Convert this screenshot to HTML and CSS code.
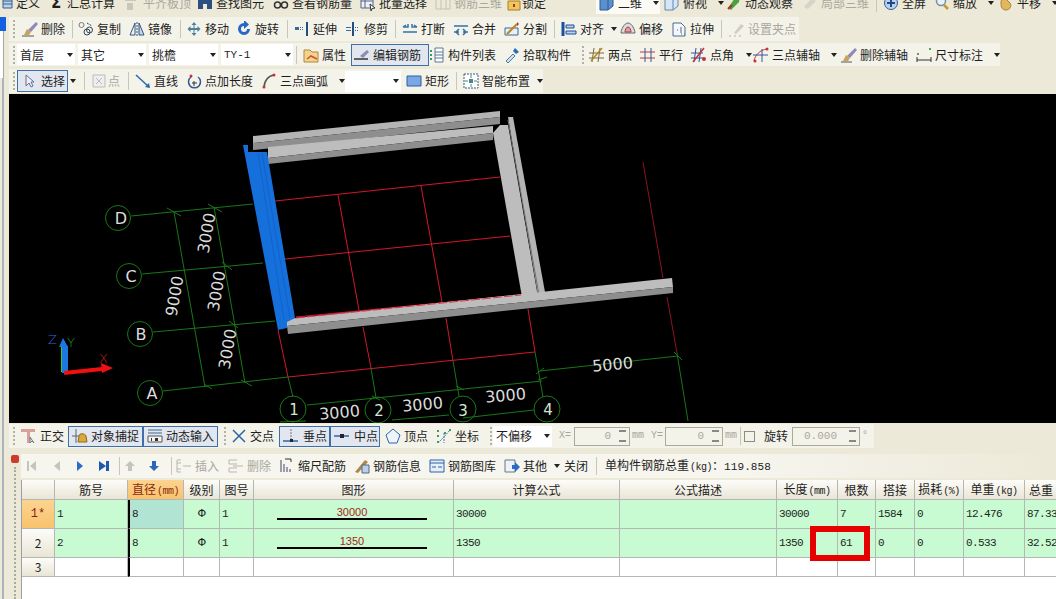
FILE: index.html
```html
<!DOCTYPE html>
<html lang="zh-CN">
<head>
<meta charset="utf-8">
<title>钢筋编辑</title>
<link rel="stylesheet" href="styles.css">
</head>
<body>
<div class="tb top">
  <div class="it"><svg class="ic" viewBox="0 0 16 16"><path d="M6 2h9v11H6z" fill="#bcd0ea" stroke="#36618f"/><path d="M6 6h9M6 9h9" stroke="#36618f"/></svg><span>定义</span></div>
  <div class="it"><b class="ic sigma">Σ</b><span>汇总计算</span></div>
  <div class="it off"><svg class="ic" viewBox="0 0 16 16"><path d="M1 2h11v4H1zM3 8h6v7H3z" fill="#c9c7ba"/></svg><span>平齐板顶</span></div>
  <div class="it"><svg class="ic" viewBox="0 0 16 16"><path d="M1 3h5v11H1zM10 3h5v11h-5zM6 5h4v4H6z" fill="#2d4f80"/></svg><span>查找图元</span></div>
  <div class="it"><svg class="ic" viewBox="0 0 16 16"><circle cx="4.500" cy="10" r="3" fill="none" stroke="#333" stroke-width="1.500"/><circle cx="11.500" cy="10" r="3" fill="none" stroke="#333" stroke-width="1.500"/></svg><span>查看钢筋量</span></div>
  <div class="it"><svg class="ic" viewBox="0 0 16 16"><path d="M1 2h12v11H1zM1 6h12M5 2v11" fill="#eef" stroke="#567"/><path d="M10 9l5 4-3 .5-1 2.500z" fill="#fff" stroke="#333"/></svg><span>批量选择</span></div>
  <div class="it off"><svg class="ic" viewBox="0 0 16 16"><path d="M1 2h14v12H1zM6 2v12M11 2v12" fill="none" stroke="#c4c2b6"/></svg><span>钢筋三维</span></div>
  <div class="it lock"><svg class="ic" viewBox="0 0 16 16"><path d="M2 6h12v9H2z" fill="#f1c65c" stroke="#a87f2a"/><path d="M7 9h2v3H7z" fill="#a33"/></svg><span>锁定</span></div>
  <div class="it white"><svg class="ic" viewBox="0 0 16 16"><path d="M1 4l5-3h8v10l-5 4H1z" fill="#5c8fd0" stroke="#2b5a96"/><path d="M1 4h8v11M9 4l5-3" fill="none" stroke="#2b5a96"/></svg><span>二维</span><i class="caret"></i></div>
  <div class="it"><svg class="ic" viewBox="0 0 16 16"><path d="M1 4l5-3h8v10l-5 4H1z" fill="#d7e5f5" stroke="#6287b3"/><path d="M1 4h8v11M9 4l5-3" fill="none" stroke="#6287b3"/></svg><span>俯视</span><i class="caret"></i></div>
  <div class="it"><svg class="ic" viewBox="0 0 16 16"><path d="M2 13L9 3l5-1-1 5-8 8z" fill="#4aa23c"/><path d="M2 14l4-4" stroke="#b2342c" stroke-width="2"/></svg><span>动态观察</span></div>
  <div class="it off"><svg class="ic" viewBox="0 0 16 16"><path d="M2 12L10 3l4 3-8 8z" fill="#d6d4c8"/></svg><span>局部三维</span></div>
  <i class="sep"></i>
  <div class="it"><svg class="ic" viewBox="0 0 16 16"><circle cx="8" cy="8" r="6.500" fill="#b9d2ee" stroke="#2c5d9a"/><path d="M8 4v8M4 8h8" stroke="#1e4a86" stroke-width="2"/></svg><span>全屏</span></div>
  <div class="it"><svg class="ic" viewBox="0 0 16 16"><circle cx="7" cy="6" r="4.500" fill="#e8f0f8" stroke="#7a8ea4" stroke-width="1.500"/><path d="M10 10l4 4" stroke="#c69a2c" stroke-width="2.500"/></svg><span>缩放</span><i class="caret"></i></div>
  <div class="it"><svg class="ic" viewBox="0 0 16 16"><path d="M3 8c0-4 2-6 4-5l5 5c2 3 0 7-4 7s-5-3-5-7z" fill="#e2b75e" stroke="#a57f31"/></svg><span>平移</span><i class="caret"></i></div>
</div>

<div class="shell">
  <div class="gutter">
    <div class="g-blue"></div>
    <div class="g-panel"></div>
    <div class="g-line"></div>
  </div>
  <main class="main">
    <div class="tb strip r2">
      <i class="grip"></i>
      <div class="it"><svg class="ic" viewBox="0 0 16 16"><path d="M0 15h12" stroke="#555"/><path d="M6 9l8-8 2 2-7 8z" fill="#8f8ab8"/><path d="M2 14l3-6 4 3-2 3z" fill="#c9a35a"/></svg><span>删除</span></div>
      <i class="sep"></i>
      <div class="it"><svg class="ic" viewBox="0 0 16 16"><circle cx="3.500" cy="4" r="2.500" fill="none" stroke="#778"/><circle cx="9" cy="11" r="3" fill="none" stroke="#345"/><circle cx="11.500" cy="9" r="3" fill="none" stroke="#345"/><path d="M9 2l5 3" stroke="#345" stroke-dasharray="2 1"/></svg><span>复制</span></div>
      <div class="it"><svg class="ic" viewBox="0 0 16 16"><path d="M6 2L1 14h5z" fill="none" stroke="#2f557f"/><path d="M8 1v14" stroke="#2f557f" stroke-dasharray="2 1"/><path d="M10 2l5 12h-5z" fill="#c7d6e6" stroke="#2f557f"/></svg><span>镜像</span></div>
      <i class="sep"></i>
      <div class="it"><svg class="ic" viewBox="0 0 16 16"><path d="M8 1l2.500 3h-2v3h3V5l3 3-3 3V9h-3v3h2L8 15l-2.500-3h2V9h-3v2l-3-3 3-3v2h3V4h-2z" fill="#4d7f9e"/></svg><span>移动</span></div>
      <div class="it"><svg class="ic" viewBox="0 0 16 16"><path d="M8 2a6 6 0 1 0 6 6h-3a3 3 0 1 1-3-3v3l5-4.500L8-1z" fill="#2868c4"/></svg><span>旋转</span></div>
      <i class="sep"></i>
      <div class="it"><svg class="ic" viewBox="0 0 16 16"><path d="M1 6h4v3H1zM6 6h1v1H6zM8 6h1v1H8zM6 8h1v1H6zM8 8h1v1H8z" fill="#3a6a9a"/><path d="M13 1v14" stroke="#234f80" stroke-width="2"/></svg><span>延伸</span></div>
      <div class="it"><svg class="ic" viewBox="0 0 16 16"><path d="M1 6h5v1H1zM1 9h5v1H1zM10 6h1v1h-1zM12 6h1v1h-1zM10 9h1v1h-1zM12 9h1v1h-1z" fill="#3a6a9a"/><path d="M8 1v14" stroke="#234f80" stroke-width="2"/></svg><span>修剪</span></div>
      <i class="sep"></i>
      <div class="it"><svg class="ic" viewBox="0 0 16 16"><path d="M1 6h5v-3M10 3v3h5M1 11h14M1 6l3-2M15 6l-3-2" fill="none" stroke="#3672a8" stroke-width="1.500"/></svg><span>打断</span></div>
      <div class="it"><svg class="ic" viewBox="0 0 16 16"><path d="M1 5h14M1 11h5M10 11h5M6 8l-3 3 3 3M10 8l3 3-3 3" fill="none" stroke="#3672a8" stroke-width="1.500"/></svg><span>合并</span></div>
      <div class="it"><svg class="ic" viewBox="0 0 16 16"><path d="M1 7h13v7H1z" fill="#eee" stroke="#2f6a9a"/><path d="M3 13L13 3" stroke="#b8862a" stroke-width="2"/><path d="M13 1l2 2-2 2z" fill="#b22"/></svg><span>分割</span></div>
      <i class="sep"></i>
      <div class="it"><svg class="ic" viewBox="0 0 16 16"><path d="M2 1v14" stroke="#1c4f9c" stroke-width="3"/><path d="M5 4h8v3H5zM5 10h10v3H5z" fill="#bcd0ea" stroke="#1c4f9c"/></svg><span>对齐</span><i class="caret near"></i></div>
      <div class="it"><svg class="ic" viewBox="0 0 16 16"><path d="M1 12c0-3 3-10 7-10s7 7 7 10z" fill="#ddd" stroke="#666"/><path d="M5 11c0-2 1-5 3-5s3 3 3 5z" fill="#e79a9a" stroke="#945"/></svg><span>偏移</span></div>
      <div class="it"><svg class="ic" viewBox="0 0 16 16"><path d="M2 2h8l4 4v9H2z" fill="#f4f6fa" stroke="#4d6b8d"/><path d="M10 6v6M6 9h1M10 13h1M13 13h1" stroke="#4d6b8d"/></svg><span>拉伸</span></div>
      <i class="sep"></i>
      <div class="it off"><svg class="ic" viewBox="0 0 16 16"><path d="M5 12L12 3l3 2-8 8z" fill="#d0cec2"/><path d="M0 15h2M5 15h2M10 15h2" stroke="#b3b1a5"/></svg><span>设置夹点</span></div>
    </div>

    <div class="tb strip r3">
      <i class="grip"></i>
      <div class="combo"><span>首层</span><i class="caret"></i></div>
      <div class="combo"><span>其它</span><i class="caret"></i></div>
      <div class="combo"><span>挑檐</span><i class="caret"></i></div>
      <div class="combo"><span class="mono">TY-1</span><i class="caret"></i></div>
      <i class="sep"></i>
      <div class="it"><svg class="ic" viewBox="0 0 16 16"><path d="M1 3h6l2 2h6v10H1z" fill="#f3d48a" stroke="#b0873a"/><path d="M4 12l4-3 6 3" fill="none" stroke="#c9513a" stroke-width="1.500"/></svg><span>属性</span></div>
      <div class="it btn"><svg class="ic" viewBox="0 0 16 16"><path d="M0 12h14" stroke="#333" stroke-width="1.500"/><path d="M6 9l7-6 2 2-6 6z" fill="#8f8ab8"/></svg><span>编辑钢筋</span></div>
      <div class="it"><svg class="ic" viewBox="0 0 16 16"><path d="M1 3h2v2H1zM1 7h2v2H1zM1 11h2v2H1z" fill="#3c9a5c"/><path d="M6 1h8v14H6zM6 5h8M6 8h8M6 11h8" fill="#fff" stroke="#5a7896"/></svg><span>构件列表</span></div>
      <div class="it"><svg class="ic" viewBox="0 0 16 16"><path d="M2 14l7-7 2 2-7 7z" fill="#cfe0f0" stroke="#4a78a8"/><path d="M9 4l2-3 4 4-3 2z" fill="#2b6cb8"/></svg><span>拾取构件</span></div>
      <i class="grip"></i>
      <div class="it"><svg class="ic" viewBox="0 0 16 16"><path d="M0 6h15M0 11h15M5 1L3 15M11 1L9 15" stroke="#786a3a"/><path d="M13 1L2 14" stroke="#b4862a" stroke-width="1.500"/></svg><span>两点</span></div>
      <div class="it"><svg class="ic" viewBox="0 0 16 16"><path d="M0 5h15M0 11h15" stroke="#c2353a"/><path d="M5 1v14M11 1v14" stroke="#33569a"/></svg><span>平行</span></div>
      <div class="it"><svg class="ic" viewBox="0 0 16 16"><path d="M0 6h12M0 11h12M5 1L3 15M10 1L8 15" stroke="#33569a"/><path d="M13 1L2 15" stroke="#c2353a" stroke-width="1.500"/><circle cx="13" cy="12" r="2" fill="#c2353a"/></svg><span>点角</span><i class="caret wide"></i></div>
      <div class="it"><svg class="ic" viewBox="0 0 16 16"><path d="M1 14C2 8 7 3 14 2" fill="none" stroke="#c2353a"/><path d="M0 8h15M9 2v13" stroke="#33569a"/><circle cx="2" cy="14" r="1.500" fill="#c2353a"/><circle cx="14" cy="2" r="1.500" fill="#c2353a"/></svg><span>三点辅轴</span><i class="caret"></i></div>
      <div class="it"><svg class="ic" viewBox="0 0 16 16"><path d="M0 15h11" stroke="#555"/><path d="M6 9l8-8 2 2-7 8z" fill="#8f8ab8"/><path d="M2 14l3-6 4 3-2 3z" fill="#c9a35a"/></svg><span>删除辅轴</span></div>
      <div class="it"><svg class="ic" viewBox="0 0 16 16"><path d="M1 10v5M15 10v5M1 13h14" stroke="#333"/><path d="M1 6h2v2H1zM13 1h2v2h-2z" fill="#5aa05a"/></svg><span>尺寸标注</span><i class="caret"></i></div>
    </div>

    <div class="tb strip r4">
      <i class="grip"></i>
      <div class="it btn wide-pad"><svg class="ic" viewBox="0 0 16 16"><path d="M5 2v11l3-3 2 4 2-1-2-4h3z" fill="#eef" stroke="#66738a"/></svg><span>选择</span></div>
      <i class="caret dark"></i>
      <i class="sep"></i>
      <div class="it off"><svg class="ic" viewBox="0 0 16 16"><path d="M2 2h12v12H2zM5 5l6 6M11 5l-6 6" fill="#eee" stroke="#bbb"/></svg><span>点</span></div>
      <i class="sep"></i>
      <div class="it"><svg class="ic" viewBox="0 0 16 16"><path d="M1 2l13 12" stroke="#2c6aa8" stroke-width="1.500"/><path d="M15 15l-1-5-4 4z" fill="#2c6aa8"/></svg><span>直线</span></div>
      <div class="it"><svg class="ic" viewBox="0 0 16 16"><path d="M5 4a6 6 0 1 0 7 0" fill="none" stroke="#33569a" stroke-width="1.500"/><path d="M8 8v5M6 10h5" stroke="#333"/><circle cx="5" cy="3" r="1.500" fill="#c2353a"/></svg><span>点加长度</span></div>
      <div class="it"><svg class="ic" viewBox="0 0 16 16"><path d="M3 15C3 8 7 3 13 2" fill="none" stroke="#555" stroke-width="1.500"/><circle cx="3" cy="14" r="1.500" fill="#c2353a"/><circle cx="13" cy="2" r="1.500" fill="#c2353a"/></svg><span>三点画弧</span><i class="caret"></i></div>
      <div class="combo blank"><i class="caret"></i></div>
      <div class="it"><svg class="ic" viewBox="0 0 16 16"><path d="M1 3h14v10H1z" fill="#7aa8e4" stroke="#2f5f9e"/></svg><span>矩形</span></div>
      <i class="sep"></i>
      <div class="it"><svg class="ic" viewBox="0 0 16 16"><path d="M1 1h14v14H1z" fill="#fff" stroke="#3b5b7c" stroke-dasharray="2 1"/><path d="M6 6h4v4H6z" fill="#4d7f9e"/><path d="M2 8h3M11 8h3M8 2v3M8 11v3" stroke="#3c9a5c"/></svg><span>智能布置</span><i class="caret near"></i></div>
    </div>

    <svg class="canvas" viewBox="9 94 1047 329" font-family="'DejaVu Sans',sans-serif">
      <rect x="9" y="94" width="1047" height="329" fill="#000"/>
      <g fill="none" stroke="#d3182a" stroke-width="1">
        <path d="M275 201L500 177M285 259L510 236M296 317L521 295M288 377L535 352"/>
        <path d="M278 330L288 377M338 195L359 310M363 327L371 368M421 186L442 302M446 318L453 361M528 309L535 352"/>
        <path d="M643 162L663 278" stroke="#8c1420"/><path d="M667 297L677 353" stroke="#8c1420"/>
      </g>
      <g fill="none" stroke="#187818" stroke-width="1">
        <path d="M131 216L253 204M142 274L263 263M153 332L275 321M163 391L288 377"/>
        <path d="M174 212L205 387M214 207L245 383"/>
        <path d="M288 377L293 397M371 368L376 398M453 361L459 396M535 352L543 397M677 353L688 421"/>
        <path d="M307 405L542 381M306 421L280 422M463 418L534 410M392 420L449 415M540 371L678 356"/>
        <path d="M167 208L181 216M208 204L222 212M222 262L232 270M229 321L238 328M204 384L212 389M241 380L252 386M372 396L380 400M456 386L464 390M538 380L547 377M536 374L544 368M674 352L682 360"/>
        <circle cx="118" cy="218" r="12.500"/><circle cx="129" cy="276" r="12.500"/><circle cx="140" cy="334" r="12.500"/><circle cx="150" cy="393" r="12.500"/>
        <circle cx="293" cy="409" r="13"/><circle cx="378" cy="410" r="13"/><circle cx="463" cy="409" r="13"/><circle cx="547" cy="409" r="13"/>
      </g>
      <g fill="#dcdcdc" font-size="16" text-anchor="middle">
        <text x="121" y="224">D</text><text x="131" y="282">C</text><text x="141" y="340">B</text><text x="152" y="399">A</text>
      </g>
      <g fill="#cfe8cf" font-size="15" text-anchor="middle">
        <text x="294" y="415">1</text><text x="379" y="416">2</text><text x="463" y="416">3</text><text x="548" y="415">4</text>
      </g>
      <g fill="#dcdcdc" font-size="16" text-anchor="middle">
        <text transform="translate(212 234) rotate(-80)">3000</text>
        <text transform="translate(222 292) rotate(-80)">3000</text>
        <text transform="translate(233 350) rotate(-80)">3000</text>
        <text transform="translate(180 297) rotate(-80)">9000</text>
        <text transform="translate(340 418) rotate(-5)">3000</text>
        <text transform="translate(423 410) rotate(-5)">3000</text>
        <text transform="translate(506 401) rotate(-5)">3000</text>
        <text transform="translate(613 370) rotate(-5)">5000</text>
      </g>
      <polygon points="253,136 500,111 500,117 253,143" fill="#b4b4b4"/>
      <polygon points="253,143 500,117 500,124 253,150" fill="#8e8e8e"/>
      <polygon points="268,147 493,126 493,133 268,158" fill="#bdbdbd"/>
      <polygon points="268,158 493,133 493,140 268,164" fill="#8e8e8e"/>
      <polygon points="508,117 513,117 545,292 538,295" fill="#b4b4b4"/>
      <polygon points="493,133 500,125 508,125 538,297 522,297" fill="#bdbdbd"/>
      <path d="M508 120L539 295" stroke="#707070"/>
      <rect x="539" y="292" width="6" height="5" fill="#8e8e8e"/>
      <polygon points="287,319 672,278 673,287 287,326" fill="#bdbdbd"/>
      <polygon points="287,326 673,287 673,293 288,334" fill="#8e8e8e"/>
      <path d="M296 318L521 295" stroke="#d83a50" stroke-dasharray="9 2"/>
      <polygon points="243,145 248,145 248,152 267,152 295,318 287,322 287,328 278,330" fill="#1570dc"/>
      <path d="M258 153L284 320M262 153L290 318" stroke="#1263c8"/>
      <path d="M62 372L62 345" stroke="#30d030" stroke-width="2"/>
      <path d="M65 373V346" stroke="#1c78e0" stroke-width="6"/>
      <path d="M63 338l-4 9h9z" fill="#1c78e0"/>
      <path d="M64 373L102 369" stroke="#f01010" stroke-width="4"/>
      <path d="M113 368l-12-5 1 10z" fill="#f01010"/>
      <g font-size="13" font-weight="200">
        <text x="48" y="344" fill="#3868d8">Z</text><text x="67" y="347" fill="#20a020">Y</text><text x="99" y="363" fill="#c02020">X</text>
      </g>
    </svg>

    <div class="tb strip r5">
      <i class="grip"></i>
      <div class="it"><svg class="ic" viewBox="0 0 16 16"><path d="M0 1h14v3H9v11H6V4H0z" fill="#d9a09a"/><path d="M9 9v6l2-2 2 2z" fill="#eef" stroke="#778"/></svg><span>正交</span></div>
      <div class="it btn"><svg class="ic" viewBox="0 0 16 16"><path d="M4 1v14M0 8h8" stroke="#567"/><path d="M7 8c0-3 6-3 7 0l1 6H6z" fill="#d9a93c" stroke="#8a6c1e"/></svg><span>对象捕捉</span></div>
      <div class="it btn"><svg class="ic" viewBox="0 0 16 16"><path d="M1 2h14M1 5h14" stroke="#3b6a9a"/><path d="M1 8h14v6H1z" fill="#f4f4f4" stroke="#555"/><path d="M4 10h1v3H4zM8 10h3v3H8z" fill="#333"/></svg><span>动态输入</span></div>
      <i class="grip shift6"></i>
      <div class="it"><svg class="ic" viewBox="0 0 16 16"><path d="M2 2l12 12M14 2L2 14" stroke="#2c64a8" stroke-width="1.500"/></svg><span>交点</span></div>
      <div class="it btn pad4"><svg class="ic" viewBox="0 0 16 16"><path d="M0 13h15" stroke="#2c64a8" stroke-width="1.500"/><path d="M8 1v11" stroke="#777" stroke-dasharray="2 1"/><path d="M7 11h3v3H7z" fill="#223"/></svg><span>垂点</span></div>
      <div class="it btn pad4"><svg class="ic" viewBox="0 0 16 16"><path d="M0 8h15" stroke="#2c64a8" stroke-width="1.500"/><path d="M6 6h4v4H6z" fill="#223"/></svg><span>中点</span></div>
      <div class="it shift5"><svg class="ic" viewBox="0 0 16 16"><path d="M8 1l7 6-3 8H4L1 7z" fill="#eef4fb" stroke="#2c64a8"/></svg><span>顶点</span></div>
      <div class="it"><svg class="ic" viewBox="0 0 16 16"><path d="M8 5v10M2 15l6-6 6-7" fill="none" stroke="#4a78a8" stroke-dasharray="2 1"/><path d="M1 2h2v2H1zM1 7h2v2H1zM1 13h2v2H1zM13 1h2v2h-2zM8 4h2v2H8z" fill="#3c9a5c"/></svg><span>坐标</span></div>
      <i class="grip"></i>
      <div class="combo full"><span>不偏移</span><i class="caret"></i></div>
      <span class="lbl shift7">X=</span>
      <div class="spin"><span>0</span><i class="arrows"></i></div>
      <span class="lbl unit">mm</span>
      <span class="lbl">Y=</span>
      <div class="spin"><span>0</span><i class="arrows"></i></div>
      <span class="lbl unit">mm</span>
      <i class="sep"></i>
      <i class="check"></i>
      <span>旋转</span>
      <div class="spin rot"><span>0.000</span><i class="arrows"></i></div>
      <span class="lbl unit">°</span>
    </div>

    <section class="lower">
      <div class="rail">
        <i class="close"></i>
        <i class="dots"></i>
      </div>
      <div class="pane">
        <div class="tb strip r6">
          <div class="nav off"><svg viewBox="0 0 16 16"><path d="M4 3h2v10H4zM13 3v10L7 8z" fill="#c4c4bc"/></svg></div>
          <div class="nav off"><svg viewBox="0 0 16 16"><path d="M11 3v10L5 8z" fill="#c4c4bc"/></svg></div>
          <div class="nav"><svg viewBox="0 0 16 16"><path d="M5 3v10l6-5z" fill="#2a6cc4"/></svg></div>
          <div class="nav"><svg viewBox="0 0 16 16"><path d="M3 3v10l7-5zM10 3h3v10h-3z" fill="#1f58ac"/></svg></div>
          <i class="sep"></i>
          <div class="nav off"><svg viewBox="0 0 16 16"><path d="M8 3l5 5h-3v5H6V8H3z" fill="#c4c4bc"/></svg></div>
          <div class="nav"><svg viewBox="0 0 16 16"><path d="M8 13l5-5h-3V3H6v5H3z" fill="#2a66bc"/></svg></div>
          <i class="sep"></i>
          <div class="it off"><svg class="ic" viewBox="0 0 16 16"><path d="M5 2H1v12h4M5 5H1M5 11H1M7 8h8" fill="none" stroke="#b9b7ab"/></svg><span>插入</span></div>
          <div class="it off"><svg class="ic" viewBox="0 0 16 16"><path d="M9 2H1v4h8M9 10H1v4h8M5 8h10" fill="none" stroke="#b9b7ab"/></svg><span>删除</span></div>
          <div class="it"><svg class="ic" viewBox="0 0 16 16"><path d="M2 2v12M5 6v8M8 9v5M11 11v3" stroke="#446" /><path d="M6 1h6v3" fill="none" stroke="#333"/></svg><span>缩尺配筋</span></div>
          <div class="it"><svg class="ic" viewBox="0 0 16 16"><path d="M1 14L11 2l3 2L4 15z" fill="#b2864a"/><path d="M8 7h7v8H8z" fill="#bcd0ea" stroke="#567"/></svg><span>钢筋信息</span></div>
          <div class="it"><svg class="ic" viewBox="0 0 16 16"><path d="M1 2h14v12H1z" fill="#e6eef8" stroke="#2c64a8"/><path d="M1 5h14M3 9h4M9 9h4" stroke="#2c64a8"/></svg><span>钢筋图库</span></div>
          <div class="it"><svg class="ic" viewBox="0 0 16 16"><path d="M1 2h10v12H1z" fill="#eef2f8" stroke="#678"/><path d="M8 7h3V4l5 5-5 5v-3H8z" fill="#2a6cc4"/></svg><span>其他</span><i class="caret near"></i></div>
          <span>关闭</span>
          <i class="sep"></i>
          <span class="total">单构件钢筋总重<small class="unit-s">(kg)</small>：<span class="num">119.858</span></span>
        </div>

        <div class="grid-wrap">
          <table class="grid">
            <colgroup>
              <col class="c-h"><col class="c-no"><col class="c-d"><col class="c-lv"><col class="c-fig"><col class="c-shape"><col class="c-calc"><col class="c-desc"><col class="c-len"><col class="c-cnt"><col class="c-lap"><col class="c-loss"><col class="c-uw"><col class="c-tw">
            </colgroup>
            <thead>
              <tr>
                <th></th><th>筋号</th><th class="hot">直径<small class="unit-s">(mm)</small></th><th>级别</th><th>图号</th><th>图形</th><th>计算公式</th><th>公式描述</th><th>长度<small class="unit-s">(mm)</small></th><th>根数</th><th>搭接</th><th>损耗<small class="unit-s">(%)</small></th><th>单重<small class="unit-s">(kg)</small></th><th>总重</th>
              </tr>
            </thead>
            <tbody>
              <tr class="data">
                <th class="hot star">1*</th><td>1</td><td class="bar picked">8</td><td class="ctr">Φ</td><td>1</td>
                <td class="shape"><div class="dim">30000</div><div class="rebar"></div></td>
                <td>30000</td><td></td><td>30000</td><td>7</td><td>1584</td><td>0</td><td>12.476</td><td>87.33</td>
              </tr>
              <tr class="data">
                <th>2</th><td>2</td><td class="bar">8</td><td class="ctr">Φ</td><td>1</td>
                <td class="shape"><div class="dim">1350</div><div class="rebar"></div></td>
                <td>1350</td><td></td><td>1350</td><td>61</td><td>0</td><td>0</td><td>0.533</td><td>32.52</td>
              </tr>
              <tr class="blank-row">
                <th>3</th><td></td><td class="bar"></td><td></td><td></td><td></td><td></td><td></td><td></td><td></td><td></td><td></td><td></td><td></td>
              </tr>
            </tbody>
          </table>
          <div class="mark"></div>
        </div>
      </div>
    </section>
  </main>
</div>
</body>
</html>
```

FILE: styles.css
```css
* { box-sizing: border-box; }
html, body { margin: 0; padding: 0; }
body {
  width: 1056px;
  height: 599px;
  overflow: hidden;
  background: #ece9d8;
  color: #1e1e1e;
  font: 12px/16px "Noto Sans CJK SC", "Liberation Sans", sans-serif;
}
i, b { font-style: normal; display: block; }

/* toolbars */
.tb { display: grid; grid-auto-flow: column; justify-content: start; align-items: center; white-space: nowrap; }
.strip { background: #f4f3ea; width: max-content; padding-left: 4px; }
.top {
  margin: -9px 0 0 -3px;
  height: 24px;
  grid-template-columns: 51px 76px 73px 76px 87px 75px 71px 90px 68px 62px 76px 74px 7px 51px 64px auto;
}
.r2 {
  height: 24px;
  grid-template-columns: 9px 50px 6px 51px 51px 6px 50px 51px 7px 51px 50px 7px 51px 51px 50px 7px 59px 51px 50px 8px 70px;
}
.r3 {
  margin-top: 2px;
  height: 23px;
  grid-template-columns: 4px 61px 71px 72px 75px 7px 48px 78px 75px 78px 7px 51px 51px 62px 88px 75px 84px;
}
.r4 {
  margin: 3px 0 1px;
  height: 24px;
  grid-template-columns: 4px 51px 16px 7px 37px 7px 51px 75px 84px 61px 50px 7px 80px;
}
.r5 {
  margin-top: 1px;
  height: 24px;
  grid-template-columns: 8px 47px 75px 75px 13px 48px 51px 50px 56px 54px 3px 59px 22px 56px 21px 14px 58px 17px 4px 20px 28px 68px 14px;
}
.r6 {
  width: auto;
  height: 24px;
  padding-left: 2px;
  background: linear-gradient(90deg, #f6f5ee 70%, #ece9d8);
  grid-template-columns: 26px 23px 24px 23px 3px 24px 25px 5px 52px 51px 75px 75px 75px 60px 32px 9px auto;
}
.shift5 { margin-left: 5px; }
.shift6 { margin-left: 6px; }
.shift7 { margin-left: 7px; }

.it { display: flex; align-items: center; gap: 3px; white-space: nowrap; }
.ic { width: 16px; height: 16px; flex: none; }
.off { color: #a9a89e; }
.sigma { font: bold 15px/16px "DejaVu Sans", sans-serif; text-align: center; }
.lock { gap: 0; }
.white { background: #fbfaf5; height: 22px; padding-left: 3px; margin-right: 4px; }

.caret {
  width: 0; height: 0;
  margin-left: 8px;
  border: 3.500px solid transparent;
  border-top: 4px solid #222;
  border-bottom: 0;
}
.caret.near { margin-left: 4px; }
.caret.wide { margin-left: 9px; }
.caret.dark { margin-left: 2px; }

.sep { width: 1px; height: 18px; background: #c9c6b5; }
.grip { width: 2px; height: 18px; border-left: 2px dotted #b4b1a0; }

.btn {
  height: 22px;
  padding-left: 2px;
  background: #e2e6ee;
  border: 1px solid #3f6fa8;
}
.r5 .btn { height: 21px; padding-left: 3px; }
.wide-pad { padding-left: 3px; gap: 4px; }
.r5 .pad4 { padding-left: 3px; gap: 4px; }
.r4 .off { gap: 1px; }

.combo {
  width: calc(100% - 3px);
  height: 21px;
  display: flex;
  align-items: center;
  justify-content: space-between;
  padding-left: 3px;
  background: #fff;
}
.combo .caret { margin: 0 2px 0 0; }
.combo.blank { justify-content: flex-end; width: 56px; }
.combo.full { width: 100%; }
.mono { font: 11px/16px "Liberation Mono", monospace; }

.lbl { font: 10px/16px "Liberation Mono", monospace; color: #a5a59b; }
.unit { margin-left: 2px; }
.spin {
  width: 100%;
  height: 19px;
  display: flex;
  align-items: center;
  justify-content: flex-end;
  gap: 8px;
  padding-right: 3px;
  border: 1px solid #aaa99c;
  color: #a9a89e;
  font: 11px/16px "Liberation Mono", monospace;
}
.rot { gap: 12px; }
.arrows { width: 7px; height: 12px; background: linear-gradient(#888 0 2px, transparent 2px 10px, #888 10px); }
.check { width: 11px; height: 11px; border: 1px solid #8d8c80; background: #f4f3ea; }

/* drawing */
.canvas { display: block; width: 1047px; height: 329px; flex: none; }

/* shell */
.shell { display: flex; margin-top: 2px; height: 582px; }
.gutter { width: 9px; flex: none; display: flex; flex-direction: column; }
.g-blue { width: 6px; height: 14px; background: #1560e0; }
.g-panel { width: 4px; height: 47px; background: #fff; border-right: 1px solid #a8a8a0; }
.g-line { flex: 1; width: 2px; margin-left: 2px; background: #aab3be; }
.main { width: 1047px; display: flex; flex-direction: column; min-width: 0; }

/* lower panel */
.lower { display: flex; margin-top: 4px; flex: 1; min-height: 0; }
.rail { width: 12px; flex: none; display: flex; flex-direction: column; padding-left: 2px; }
.close { width: 8px; height: 8px; margin-top: 3px; border-radius: 2px; background: #cc3b2c; }
.dots { flex: 1; margin: 4px 0 0 3px; width: 2px; border-left: 2px dotted #a9a99c; }
.pane { flex: 1; min-width: 0; padding-top: 2px; display: flex; flex-direction: column; }
.nav { width: 16px; height: 16px; }
.nav svg { display: block; width: 16px; height: 16px; }
.total { white-space: nowrap; }
.num { font: 11px/16px "Liberation Mono", monospace; letter-spacing: .1px; }
.unit-s { font: 10px/1 "Liberation Mono", monospace; letter-spacing: -.5px; margin-left: 1px; }

/* grid */
.grid-wrap {
  position: relative;
  flex: 1;
  margin-top: 2px;
  background: #fff;
  overflow: hidden;
  border-left: 1px solid #98a0a8;
}
.grid {
  width: 1036px;
  table-layout: fixed;
  border-collapse: separate;
  border-spacing: 0;
  font: 11px/14px "Liberation Mono", monospace;
  letter-spacing: -.6px;
}
.c-h { width: 33px; } .c-no { width: 73px; } .c-d { width: 56px; } .c-lv { width: 36px; }
.c-fig { width: 34px; } .c-shape { width: 200px; } .c-calc { width: 166px; } .c-desc { width: 157px; }
.c-len { width: 61px; } .c-cnt { width: 38px; } .c-lap { width: 39px; } .c-loss { width: 49px; }
.c-uw { width: 61px; } .c-tw { width: 33px; }

.grid th, .grid td {
  padding: 0 2px;
  overflow: hidden;
  white-space: nowrap;
  border-right: 1px solid #b4b8b4;
  border-bottom: 1px solid #b4b8b4;
}
.grid th {
  font: 400 12px/14px "Noto Sans CJK SC", sans-serif;
  letter-spacing: 0;
  text-align: center;
  background: linear-gradient(#fdfcf8, #e9e5d6);
}
.grid thead tr { height: 20px; }
.grid th.hot { background: linear-gradient(#fbd491, #f9c26c); color: #8a2a10; }
.grid th.star { color: #8a1a1a; font-family: "Liberation Mono", monospace; }
.data { height: 29px; }
.data td { background: #c8fbd2; }
.blank-row { height: 19px; }
.grid td.picked { background: #b2e4d4; }
.grid td.bar { border-left: 2px solid #000; }
.grid td.ctr { text-align: center; font-family: "DejaVu Sans", sans-serif; }
.grid td.shape { padding: 0 26px 2px 23px; text-align: center; }
.dim { color: #a8241c; font: 11px/12px "Liberation Sans", sans-serif; letter-spacing: 0; }
.rebar { height: 2px; background: #000; }

.mark {
  position: absolute;
  left: 788px;
  top: 46px;
  width: 60px;
  height: 35px;
  border: 6px solid #e60000;
}
```
